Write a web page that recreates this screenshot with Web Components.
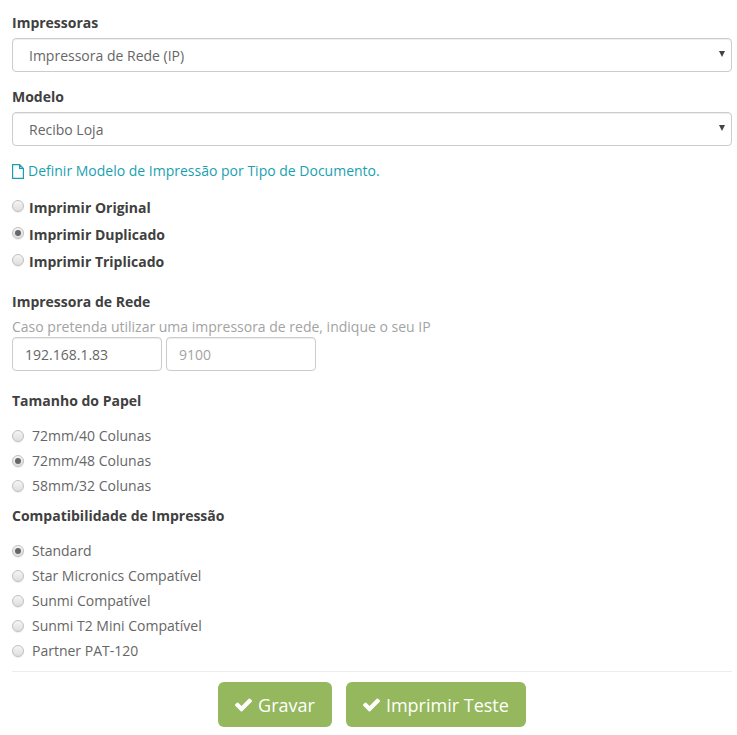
<!DOCTYPE html>
<html>
<head>
<meta charset="utf-8">
<title>Impressoras</title>
<style>
    html, body { margin: 0; background: #fff; }
    body { font: 14px/20px "Open Sans", sans-serif; color: #404040; }
</style>
</head>
<body>
<print-settings></print-settings>

<template id="field-label-tpl">
    <style>
        :host { display: block; font-weight: 700; color: #404040; line-height: 20px; }
    </style>
    <slot></slot>
</template>

<template id="select-box-tpl">
    <style>
        :host { display: block; height: 34px; box-sizing: border-box; border: 1px solid #ccc; border-radius: 4px;
            background: #fff; box-shadow: inset 0 1px 1px rgba(0,0,0,.075); color: #666;
            padding: 7px 16px 5px; line-height: 20px; position: relative; }
        .arrow { position: absolute; right: 6px; top: 12px; width: 0; height: 0;
            border-left: 3px solid transparent; border-right: 3px solid transparent; border-top: 6px solid #444; }
    </style>
    <slot></slot><span class="arrow"></span>
</template>

<template id="text-box-tpl">
    <style>
        :host { display: block; width: 150px; height: 34px; box-sizing: border-box; border: 1px solid #ccc; border-radius: 4px;
            background: #fff; box-shadow: inset 0 1px 1px rgba(0,0,0,.075); color: #666;
            padding: 7px 12px 5px; line-height: 20px; }
        :host([placeholder]) { color: #a3a3a3; }
    </style>
    <slot></slot>
</template>

<template id="radio-option-tpl">
    <style>
        :host { display: flex; align-items: center; height: 25px; color: #666; }
        :host([strong]) { height: 27px; font-weight: 700; color: #404040; }
        .dot { flex: none; width: 12px; height: 12px; box-sizing: border-box; border: 1px solid #c0c0c0; border-radius: 50%;
            background: linear-gradient(#f5f5f5, #dedede); margin-right: 8px; display: flex; align-items: center; justify-content: center;
            box-shadow: 0 1px 1px rgba(0,0,0,.08); }
        :host([strong]) .dot { margin: -3px 5px 0 0; }
        :host([checked]) .dot::after { content: ""; width: 6px; height: 6px; border-radius: 50%; background: #666; }
    </style>
    <span class="dot"></span><slot></slot>
</template>

<template id="ok-button-tpl">
    <style>
        :host { display: inline-flex; align-items: center; height: 45px; box-sizing: border-box; padding: 0 17px;
            background: #95b75d; border-radius: 6px; color: #fff; font-size: 18px; }
        svg { width: 17px; height: 14px; margin-right: 6px; fill: #fff; }
    </style>
    <svg viewBox="121 78 1550 1188"><path d="M1671 310q0 40-28 68l-724 724-136 136q-28 28-68 28t-68-28l-136-136-362-362q-28-28-28-68t28-68l136-136q28-28 68-28t68 28l294 295 656-657q28-28 68-28t68 28l136 136q28 28 28 68z"/></svg>
    <slot></slot>
</template>

<template id="print-settings-tpl">
    <style>
        :host { display: block; padding: 13px 5px 0 12px; }
        field-label.second { margin-top: 15px; }
        select-box { margin-top: 5px; }
        .doc-link { display: flex; align-items: center; margin-top: 15px; color: #1a9fb0; }
        .doc-link svg { width: 12px; height: 15px; margin-right: 4px; }
        .copies { margin-top: 13px; }
        .net { margin-top: 17px; }
        .hint { color: #a3a3a3; margin-top: 5px; }
        .inputs { display: flex; gap: 4px; }
        .paper { margin-top: 20px; }
        .gap { height: 12px; }
        .compat { margin-top: 8px; }
        hr { border: 0; border-top: 1px solid #eee; margin: 8px 0 10px; }
        .actions { display: flex; justify-content: center; gap: 14px; }
    </style>
    <field-label>Impressoras</field-label>
    <select-box>Impressora de Rede (IP)</select-box>
    <field-label class="second">Modelo</field-label>
    <select-box>Recibo Loja</select-box>
    <div class="doc-link">
        <svg viewBox="0 0 12 15" fill="none" stroke="currentColor" stroke-width="1.2"><path d="M.6.6h7l3.8 3.8v10H.6zM7.6.6v3.8h3.8"/></svg>
        <span>Definir Modelo de Impressão por Tipo de Documento.</span>
    </div>
    <div class="copies">
        <radio-option strong>Imprimir Original</radio-option>
        <radio-option strong checked>Imprimir Duplicado</radio-option>
        <radio-option strong>Imprimir Triplicado</radio-option>
    </div>
    <field-label class="net">Impressora de Rede</field-label>
    <div class="hint">Caso pretenda utilizar uma impressora de rede, indique o seu IP</div>
    <div class="inputs">
        <text-box>192.168.1.83</text-box>
        <text-box placeholder>9100</text-box>
    </div>
    <field-label class="paper">Tamanho do Papel</field-label>
    <div class="gap"></div>
    <radio-option>72mm/40 Colunas</radio-option>
    <radio-option checked>72mm/48 Colunas</radio-option>
    <radio-option>58mm/32 Colunas</radio-option>
    <field-label class="compat">Compatibilidade de Impressão</field-label>
    <div class="gap"></div>
    <radio-option checked>Standard</radio-option>
    <radio-option>Star Micronics Compatível</radio-option>
    <radio-option>Sunmi Compatível</radio-option>
    <radio-option>Sunmi T2 Mini Compatível</radio-option>
    <radio-option>Partner PAT-120</radio-option>
    <hr>
    <div class="actions">
        <ok-button>Gravar</ok-button>
        <ok-button>Imprimir Teste</ok-button>
    </div>
</template>

<script>
    function register(tag, tplId) {
        customElements.define(tag, class extends HTMLElement {
            constructor() {
                super();
                this.attachShadow({ mode: "open" });
                this.shadowRoot.appendChild(document.getElementById(tplId).content.cloneNode(true));
            }
        });
    }
    register("field-label", "field-label-tpl");
    register("select-box", "select-box-tpl");
    register("text-box", "text-box-tpl");
    register("radio-option", "radio-option-tpl");
    register("ok-button", "ok-button-tpl");
    register("print-settings", "print-settings-tpl");
</script>
</body>
</html>
